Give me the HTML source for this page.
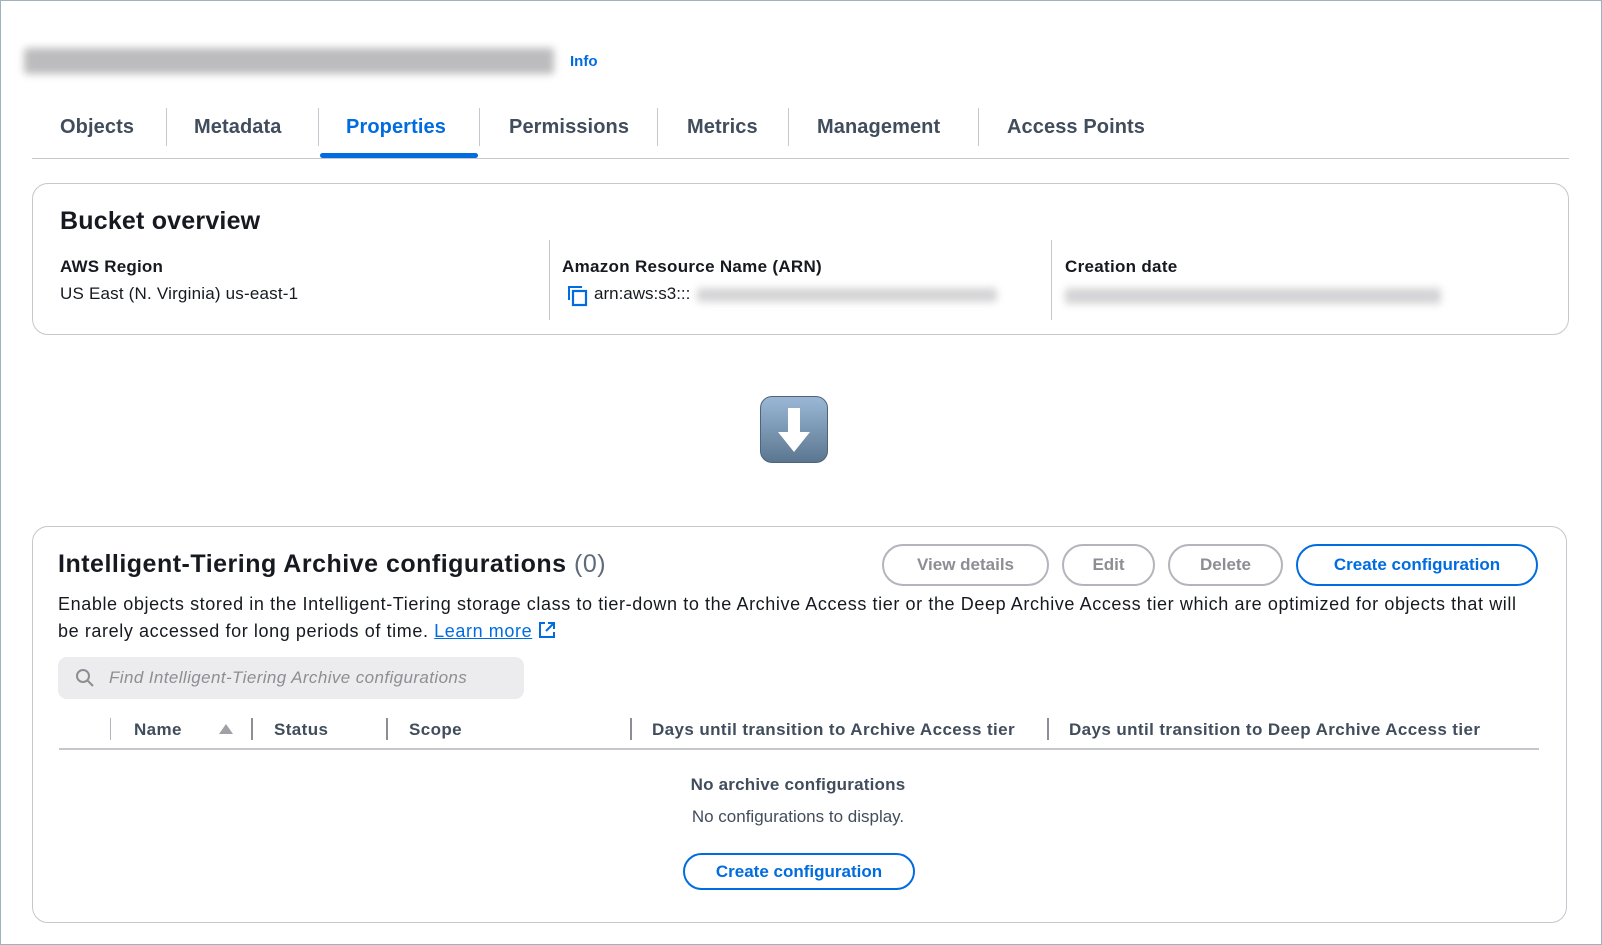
<!DOCTYPE html>
<html><head><meta charset="utf-8"><style>
*{box-sizing:border-box;margin:0;padding:0}
body{width:1602px;height:945px;background:#fff;font-family:"Liberation Sans",sans-serif;color:#16191f;position:relative;overflow:hidden}
.frame{position:absolute;left:0;top:0;width:1602px;height:945px;border:1px solid #9fb3bd}
.a{position:absolute;white-space:nowrap}
.tab{position:absolute;top:116px;font-size:20px;font-weight:bold;color:#414d5c;letter-spacing:0.1px}
.sep{position:absolute;width:1px;background:#c6c6cd}
.box{position:absolute;border:1px solid #c6c6cd;border-radius:16px}
.lbl{font-size:17px;font-weight:bold}
.val{font-size:17px}
.btn{position:absolute;height:42px;border:2px solid #b4b4bb;border-radius:21px;color:#8d8d94;font-weight:bold;font-size:17px;text-align:center;line-height:38px}
.btnp{border-color:#006ce0;color:#006ce0}
.blur{position:absolute;background:#d4d4d6;filter:blur(4px);border-radius:3px}
.th{position:absolute;top:720px;font-size:17px;font-weight:bold;color:#414d5c;letter-spacing:0.4px}
.desc{font-size:18px;letter-spacing:0.6px}
</style></head><body>
<div class="frame"></div>
<div class="blur" style="left:24px;top:48px;width:530px;height:26px;background:#bcbcbe"></div>
<div class="a" style="left:570px;top:53px;font-size:15px;font-weight:bold;color:#006ce0">Info</div>

<div class="tab" style="left:60px">Objects</div>
<div class="tab" style="left:194px">Metadata</div>
<div class="tab" style="left:346px;color:#006ce0">Properties</div>
<div class="tab" style="left:509px">Permissions</div>
<div class="tab" style="left:687px">Metrics</div>
<div class="tab" style="left:817px">Management</div>
<div class="tab" style="left:1007px">Access Points</div>
<div class="sep" style="left:166px;top:108px;height:38px"></div>
<div class="sep" style="left:318px;top:108px;height:38px"></div>
<div class="sep" style="left:479px;top:108px;height:38px"></div>
<div class="sep" style="left:657px;top:108px;height:38px"></div>
<div class="sep" style="left:788px;top:108px;height:38px"></div>
<div class="sep" style="left:978px;top:108px;height:38px"></div>
<div class="a" style="left:32px;top:158px;width:1537px;height:1px;background:#c6c6cd"></div>
<div class="a" style="left:320px;top:153px;width:158px;height:5px;background:#006ce0;border-radius:3px"></div>

<div class="box" style="left:32px;top:183px;width:1537px;height:152px"></div>
<div class="a" style="left:60px;top:207px;font-size:25px;font-weight:bold;letter-spacing:0.2px">Bucket overview</div>
<div class="sep" style="left:549px;top:240px;height:80px"></div>
<div class="sep" style="left:1051px;top:240px;height:80px"></div>
<div class="a lbl" style="left:60px;top:257px;letter-spacing:0.2px">AWS Region</div>
<div class="a val" style="left:60px;top:284px;letter-spacing:0.2px">US East (N. Virginia) us-east-1</div>
<div class="a lbl" style="left:562px;top:257px;letter-spacing:0.3px">Amazon Resource Name (ARN)</div>
<svg class="a" style="left:567px;top:285px" width="22" height="22" viewBox="0 0 22 22"><path d="M2 15V2h13" fill="none" stroke="#006ce0" stroke-width="2"/><rect x="6" y="6" width="13" height="14" fill="none" stroke="#006ce0" stroke-width="2.2"/></svg>
<div class="a val" style="left:594px;top:284px">arn:aws:s3:::</div>
<div class="blur" style="left:697px;top:288px;width:300px;height:14px"></div>
<div class="a lbl" style="left:1065px;top:257px;letter-spacing:0.3px">Creation date</div>
<div class="blur" style="left:1065px;top:288px;width:376px;height:16px"></div>

<div class="a" style="left:760px;top:396px;width:68px;height:67px;border-radius:12px;background:linear-gradient(#9ab8d6,#5b7690);border:1px solid #4e6478"></div>
<svg class="a" style="left:760px;top:396px" width="68" height="67" viewBox="0 0 68 67"><path d="M28 12h12v24h10L34 56 18 36h10z" fill="#fff"/></svg>

<div class="box" style="left:32px;top:526px;width:1535px;height:397px"></div>
<div class="a" style="left:58px;top:550px;font-size:25px;font-weight:bold;letter-spacing:0.5px">Intelligent-Tiering Archive configurations <span style="font-weight:normal;color:#5f6b7a">(0)</span></div>
<div class="btn" style="left:882px;top:544px;width:167px">View details</div>
<div class="btn" style="left:1062px;top:544px;width:93px">Edit</div>
<div class="btn" style="left:1168px;top:544px;width:115px">Delete</div>
<div class="btn btnp" style="left:1296px;top:544px;width:242px">Create configuration</div>
<div class="a desc" style="left:58px;top:594px">Enable objects stored in the Intelligent-Tiering storage class to tier-down to the Archive Access tier or the Deep Archive Access tier which are optimized for objects that will</div>
<div class="a desc" style="left:58px;top:621px">be rarely accessed for long periods of time. <span style="color:#006ce0;text-decoration:underline">Learn more</span> <svg width="18" height="18" viewBox="0 0 18 18" style="vertical-align:-2px"><path d="M7 2H2v14h14v-5M10 2h6v6M16 2L8 10" fill="none" stroke="#006ce0" stroke-width="2"/></svg></div>
<div class="a" style="left:58px;top:657px;width:466px;height:42px;background:#ececef;border-radius:9px"></div>
<svg class="a" style="left:75px;top:668px" width="20" height="20" viewBox="0 0 20 20"><circle cx="8" cy="8" r="6" fill="none" stroke="#8d8d94" stroke-width="2"/><path d="M12.5 12.5L18 18" stroke="#8d8d94" stroke-width="2"/></svg>
<div class="a" style="left:109px;top:668px;font-size:17px;font-style:italic;color:#8d8d94;letter-spacing:0.4px">Find Intelligent-Tiering Archive configurations</div>

<div class="sep" style="left:110px;top:718px;height:22px;background:#b4b4bb"></div>
<div class="sep" style="left:251px;top:718px;height:22px;width:2px;background:#8d8d94"></div>
<div class="sep" style="left:386px;top:718px;height:22px;width:2px;background:#8d8d94"></div>
<div class="sep" style="left:630px;top:718px;height:22px;width:2px;background:#8d8d94"></div>
<div class="sep" style="left:1047px;top:718px;height:22px;width:2px;background:#8d8d94"></div>
<div class="th" style="left:134px">Name</div>
<svg class="a" style="left:218px;top:723px" width="16" height="12"><path d="M8 1L15 11H1z" fill="#a0a0a6"/></svg>
<div class="th" style="left:274px">Status</div>
<div class="th" style="left:409px">Scope</div>
<div class="th" style="left:652px">Days until transition to Archive Access tier</div>
<div class="th" style="left:1069px">Days until transition to Deep Archive Access tier</div>
<div class="a" style="left:59px;top:748px;width:1480px;height:2px;background:#c6c6cd"></div>

<div class="a" style="left:-3px;width:1602px;text-align:center;top:775px;font-size:17px;font-weight:bold;color:#414d5c;letter-spacing:0.2px">No archive configurations</div>
<div class="a" style="left:-3px;width:1602px;text-align:center;top:807px;font-size:17px;color:#414d5c">No configurations to display.</div>
<div class="btn btnp" style="left:683px;top:853px;width:232px;height:37px;line-height:33px">Create configuration</div>
</body></html>
